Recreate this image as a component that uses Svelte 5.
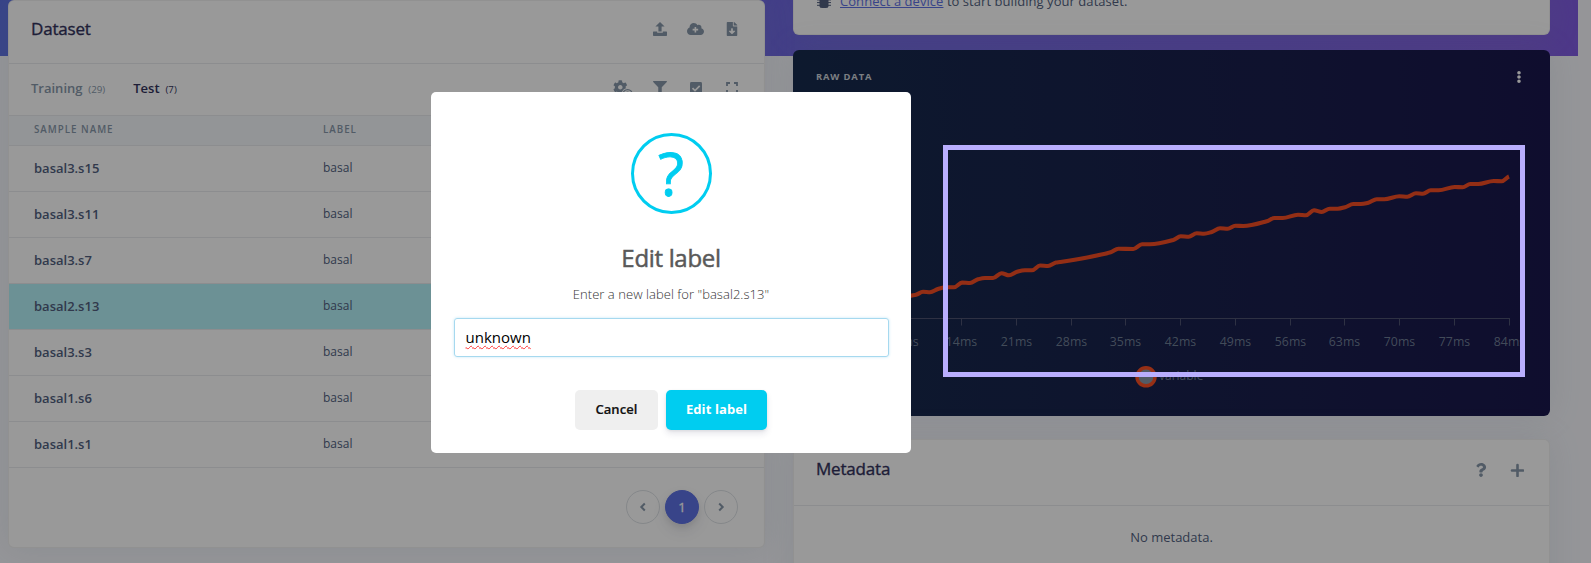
<script>
  const rows = ['basal3.s15', 'basal3.s11', 'basal3.s7', 'basal2.s13', 'basal3.s3', 'basal1.s6', 'basal1.s1'];
  const selected = 'basal2.s13';

  const points = [
    [903, 298], [911, 295.7], [916, 294.8], [923, 291.8], [930, 292.2], [938, 289], [946, 287.2], [954, 287.3], [962, 282.6],
    [970, 283], [978, 279.3], [985, 278], [993, 278], [1001.5, 273.2], [1009, 275.3], [1017, 271.8], [1025, 270.3],
    [1032, 270.3], [1040, 265.5], [1048, 266], [1056, 262.5], [1060, 262], [1110.7, 252.3], [1118.3, 248.7],
    [1133.3, 249], [1142, 244.3], [1150, 244.3], [1173.3, 240], [1180.7, 236.3], [1188.7, 236.7], [1196.7, 233.3],
    [1204, 233.7], [1211.7, 232], [1220, 228.3], [1227.7, 228.7], [1235.3, 225.7], [1243.3, 226], [1266.7, 221.3],
    [1274.7, 218], [1282.7, 218], [1298, 214.7], [1306, 215.3], [1314, 210.3], [1321.7, 212], [1329.7, 208.7],
    [1337.7, 208.7], [1345, 207.3], [1353.3, 204], [1360.7, 204], [1368.3, 202.7], [1376.7, 199.3], [1384.3, 199.3],
    [1399.3, 196.3], [1407.3, 196.7], [1416, 193.3], [1423, 193.7], [1430.7, 190.3], [1438.7, 190.3], [1454.7, 187],
    [1462.7, 187.3], [1470.3, 184], [1478.3, 184], [1493.7, 181], [1501.7, 181.3], [1509, 176.5]
  ];

  // Monotone cubic through the samples.
  function curve(p) {
    let d = `M${p[0][0]} ${p[0][1]}`;
    const slope = (i) => {
      if (i === 0 || i === p.length - 1) return -0.4;
      const a = (p[i][1] - p[i - 1][1]) / (p[i][0] - p[i - 1][0]);
      const b = (p[i + 1][1] - p[i][1]) / (p[i + 1][0] - p[i][0]);
      return a * b <= 0 ? 0 : (2 * a * b) / (a + b);
    };
    for (let i = 0; i < p.length - 1; i++) {
      const h = (p[i + 1][0] - p[i][0]) / 3;
      d += `C${p[i][0] + h} ${p[i][1] + h * slope(i)} ${p[i + 1][0] - h} ${p[i + 1][1] - h * slope(i + 1)} ${p[i + 1][0]} ${p[i + 1][1]}`;
    }
    return d;
  }

  const ticks = Array.from({ length: 12 }, (_, i) => ({ x: Math.floor(906.9 + i * 54.76) + 0.5, label: `${(i + 1) * 7}ms` }));
  let label = $state('unknown');
</script>

<div class="page">
  <div class="banner"></div>
  <main>
    <section class="card dataset">
      <header>
        <h2>Dataset</h2>
        <div class="tools">
          <svg class="ic" viewBox="0 0 14 14"><path d="M7 0L11.6 4.6H8.6V9.4H5.4V4.6H2.4zM.4 9.6H4.2V10.8H9.8V9.6H13.6Q14 9.6 14 10V13.3Q14 14 13.3 14H.7Q0 14 0 13.3V10Q0 9.6 .4 9.6z" /></svg>
          <svg class="ic cloud" viewBox="0 32 640 448"><path d="M537.6 226.6c4.1-10.7 6.4-22.4 6.4-34.6 0-53-43-96-96-96-19.7 0-38.1 6-53.3 16.2C367 64.2 315.3 32 256 32c-88.4 0-160 71.6-160 160 0 2.7.1 5.4.2 8.1C40.2 219.8 0 273.2 0 336c0 79.5 64.5 144 144 144h368c70.7 0 128-57.3 128-128 0-61.9-44-113.6-102.4-125.4z" /><path class="cut" d="M286 176h60v74h74v60h-74v74h-60v-74h-74v-60h74z" /></svg>
          <svg class="ic" viewBox="-64 0 512 512"><path d="M224 136V0H24C10.700 0 0 10.700 0 24v464c0 13.300 10.700 24 24 24h336c13.300 0 24-10.700 24-24V160H248c-13.200 0-24-10.800-24-24zm76.450 211.360l-96.420 95.700c-6.650 6.610-17.390 6.610-24.040 0l-96.420-95.700C73.420 337.290 80.540 320 94.820 320H160v-80c0-8.840 7.160-16 16-16h32c8.840 0 16 7.160 16 16v80h65.180c14.280 0 21.400 17.290 11.270 27.360zM377 105L279.100 7c-4.500-4.500-10.600-7-17-7H256v128h128v-6.100c0-6.300-2.500-12.400-7-16.900z" /></svg>
        </div>
      </header>
      <div class="tabs">
        <a class="tab">Training <small>(29)</small></a>
        <a class="tab on">Test <small>(7)</small></a>
        <div class="tools">
          <svg class="gear" viewBox="0 0 20 16"><g transform="scale(.0285)"><path d="M487.400 315.700l-42.600-24.600c4.300-23.200 4.300-47 0-70.200l42.600-24.600c4.900-2.800 7.100-8.600 5.500-14-11.100-35.600-30-67.800-54.700-94.600-3.800-4.100-10-5.100-14.800-2.300L380.800 110c-17.900-15.400-38.500-27.300-60.800-35.100V25.800c0-5.600-3.900-10.500-9.400-11.700-36.700-8.200-74.300-7.800-109.200 0-5.500 1.200-9.400 6.100-9.400 11.700V75c-22.200 7.900-42.800 19.800-60.800 35.100L88.700 85.500c-4.900-2.800-11-1.900-14.800 2.300-24.700 26.700-43.600 58.900-54.700 94.600-1.700 5.400.6 11.200 5.500 14L67.300 221c-4.300 23.200-4.300 47 0 70.200l-42.600 24.600c-4.900 2.800-7.100 8.600-5.500 14 11.100 35.600 30 67.800 54.700 94.600 3.800 4.100 10 5.100 14.800 2.300l42.600-24.600c17.900 15.400 38.500 27.300 60.800 35.100v49.200c0 5.600 3.900 10.500 9.400 11.700 36.700 8.200 74.300 7.800 109.200 0 5.500-1.200 9.400-6.100 9.400-11.700v-49.200c22.200-7.900 42.800-19.800 60.800-35.100l42.600 24.600c4.900 2.800 11 1.900 14.800-2.300 24.700-26.700 43.600-58.900 54.700-94.600 1.500-5.500-.7-11.300-5.600-14.100zM256 336c-44.100 0-80-35.900-80-80s35.900-80 80-80 80 35.900 80 80-35.900 80-80 80z" /></g><circle class="cut" cx="14.600" cy="14" r="6.100" /><circle cx="14.600" cy="14.200" r="5.300" /><circle class="cut" cx="14.600" cy="14.200" r="3.900" /><circle cx="14.600" cy="13.800" r="2.300" /></svg>
          <svg class="ic" viewBox="0 0 512 512"><path d="M487.976 0H24.028C2.710 0-8.047 25.866 7.058 40.971L192 225.941V432c0 7.831 3.821 15.170 10.237 19.662l80 55.980C298.020 518.690 320 507.493 320 487.980V225.941l184.947-184.970C520.021 25.896 509.338 0 487.976 0z" /></svg>
          <svg class="ic" viewBox="0 0 14 14"><rect x="1" y="1" width="12" height="12" rx="1.400" /><path class="tick" d="M3.500 7.200L6 9.600L10.700 4.900" /></svg>
          <svg class="ic" viewBox="0 0 14 14"><path class="stroke" d="M2 5V2H5M9 2H12V5M12 9V12H9M5 12H2V9" /></svg>
        </div>
      </div>
      <div class="thead"><span>SAMPLE NAME</span><span>LABEL</span></div>
      {#each rows as r}
        <div class="row" class:sel={r === selected}><b>{r}</b><span>basal</span></div>
      {/each}
      <footer>
        <span class="pg"><svg viewBox="0 0 8 10"><path d="M5.800 1.500L2.300 5L5.800 8.500" /></svg></span>
        <span class="pg cur">1</span>
        <span class="pg"><svg viewBox="0 0 8 10"><path d="M2.200 1.500L5.700 5L2.200 8.500" /></svg></span>
      </footer>
    </section>

    <div class="right">
      <section class="card device">
        <svg viewBox="0 0 14 15"><rect x="3" y="0" width="8" height="14.500" rx="1.300" /><path d="M0 1.500H14M0 4.200H14M0 6.900H14M0 9.600H14M0 12.300H14" /></svg>
        <p><a>Connect a device</a> to start building your dataset.</p>
      </section>
      <section class="card raw">
        <header>
          <h6>RAW DATA</h6>
          <svg viewBox="24 8 144 496"><path d="M96 184c39.800 0 72 32.200 72 72s-32.200 72-72 72-72-32.200-72-72 32.200-72 72-72zM24 80c0 39.800 32.200 72 72 72s72-32.200 72-72S135.800 8 96 8 24 40.200 24 80zm0 352c0 39.800 32.200 72 72 72s72-32.200 72-72-32.200-72-72-72-72 32.200-72 72z" /></svg>
        </header>
        <svg class="chart" viewBox="793 103 757 313">
          <path class="axis" d="M818 318.500H1509.500" />
          {#each ticks as t}
            <path class="axis" d="M{t.x} 318V325.500" />
            <text x={t.x} y="346">{t.label}</text>
          {/each}
          <path class="line" d={curve(points)} />
          <circle cx="1146" cy="376.800" r="9" />
          <text class="leg" x="1159" y="380">variable</text>
        </svg>
      </section>
      <section class="card meta">
        <header>
          <h2>Metadata</h2>
          <div class="tools">
            <svg class="ic" viewBox="-64 0 512 512"><path d="M202.021 0C122.202 0 70.503 32.703 29.914 91.026c-7.363 10.580-5.093 25.086 5.178 32.874l43.138 32.709c10.373 7.865 25.132 6.026 33.253-4.148 25.049-31.381 43.630-49.449 82.757-49.449 30.764 0 68.816 19.799 68.816 49.631 0 22.552-18.617 34.134-48.993 51.164-35.423 19.860-82.299 44.576-82.299 106.405V320c0 13.255 10.745 24 24 24h72.471c13.255 0 24-10.745 24-24v-5.773c0-42.860 125.268-44.645 125.268-160.627C377.504 66.256 286.902 0 202.021 0zM192 373.459c-38.196 0-69.271 31.075-69.271 69.271 0 38.195 31.075 69.270 69.271 69.270s69.271-31.075 69.271-69.271-31.075-69.270-69.271-69.270z" /></svg>
            <svg class="ic" viewBox="0 0 14 14"><path class="plus" d="M7.500 2V13M2 7.500H13" /></svg>
          </div>
        </header>
        <p>No metadata.</p>
      </section>
    </div>
  </main>

  <div class="overlay">
    <div class="modal" role="dialog">
      <div class="q">?</div>
      <h1>Edit label</h1>
      <p>Enter a new label for "basal2.s13"</p>
      <div class="field"><span>{label}</span></div>
      <div class="btns">
        <button class="cancel">Cancel</button>
        <button class="ok">Edit label</button>
      </div>
    </div>
  </div>
  <div class="highlight"></div>
</div>

<style>
  :global(body) { margin: 0; background: #f8f9fe; }
  .page { position: relative; height: 563px; overflow: hidden; background: #f8f9fe; font-family: 'Open Sans', sans-serif; font-size: 13px; color: #525f7f; box-sizing: border-box; }
  .page :global(*) { box-sizing: border-box; }
  .banner { width: 1578px; height: 56px; margin-bottom: -56px; background: linear-gradient(87deg, #5e72e4, #825ee4); }
  main { position: relative; display: grid; grid-template-columns: 757px 757px; gap: 28px; padding-left: 8px; align-items: start; }
  .card { background: #fff; border: 1px solid rgba(0, 0, 0, .05); border-radius: 6px; box-shadow: 0 0 32px rgba(136, 152, 170, .15); }
  h1, h2, h6, p { margin: 0; }
  h2 { font-size: 17px; line-height: 26px; font-weight: 500; color: #32325d; letter-spacing: -.18px; -webkit-text-stroke: .35px #32325d; }
  .dataset { height: 548px; display: flex; flex-direction: column; }
  .card > header { display: flex; align-items: center; justify-content: space-between; }
  .dataset > header { height: 63px; padding: 0 25.500px 6px 22px; border-bottom: 1px solid #e9ecef; }
  .tools { display: flex; align-items: center; gap: 22px; fill: #8898aa; }
  .ic { width: 14px; height: 14px; display: block; }
  .cloud { width: 17px; height: 12px; margin: 0 -1.500px; }
  .cut { fill: #fff; }
  .tick { fill: none; stroke: #fff; stroke-width: 1.700; }
  .stroke { fill: none; stroke: #8898aa; stroke-width: 1.800; }
  .plus { fill: none; stroke: #8898aa; stroke-width: 2.600; stroke-linecap: round; }
  .tabs { height: 52px; display: flex; align-items: center; padding: 0 25.500px 4px 22px; border-bottom: 1px solid #e9ecef; }
  .tab { font-size: 13px; font-weight: 600; color: #8898aa; margin-right: 28px; }
  .tab.on { color: #32325d; }
  .tab small { font-size: 9.750px; font-weight: 400; margin-left: 2.500px; }
  .tabs .tools { margin-left: auto; }
  .gear { width: 20px; height: 16px; margin: 1px -2.500px 0 0; }
  .thead { height: 30px; display: flex; align-items: center; padding: 0 0 2px 25px; background: #f6f9fc; border-bottom: 1px solid #e9ecef; font-size: 9.750px; font-weight: 600; letter-spacing: 1px; color: #8898aa; }
  .thead span:first-child, .row b { width: 289px; }
  .row { height: 46px; display: flex; align-items: center; padding: 0 0 2px 25px; border-bottom: 1px solid #e9ecef; font-size: 12px; }
  .row b { font-size: 13px; font-weight: 600; }
  .row.sel { background: #b4f2f8; }
  footer { display: flex; justify-content: flex-end; gap: 5px; padding: 22px 26px 0 0; }
  .pg { width: 34px; height: 34px; border: 1px solid #dee2e6; border-radius: 50%; display: flex; align-items: center; justify-content: center; font-size: 13px; }
  .pg svg { width: 8px; height: 10px; fill: none; stroke: #8898aa; stroke-width: 2; }
  .pg.cur { background: #5e72e4; border-color: #5e72e4; color: #fff; -webkit-text-stroke: .3px #fff; box-shadow: 0 7px 14px rgba(50, 50, 93, .1), 0 3px 6px rgba(0, 0, 0, .08); }
  .right { display: flex; flex-direction: column; }
  .device { height: 35px; margin-bottom: 15px; border-radius: 0 0 6px 6px; border-top: 0; display: flex; padding: 0 22.500px; gap: 9.500px; }
  .device svg { width: 14px; height: 15px; margin-top: -7px; fill: #525f7f; stroke: #525f7f; stroke-width: 1; }
  .device p { font-size: 13px; line-height: 20px; margin-top: -9px; letter-spacing: .05px; }
  .device a { color: #5e72e4; text-decoration: underline; }
  .raw { height: 366px; border: 0; background: linear-gradient(87deg, #172b4d, #1a174d); margin-bottom: 23px; }
  .raw > header { height: 53px; padding: 0 29px 0 23px; }
  h6 { font-size: 9.400px; font-weight: 700; letter-spacing: .85px; color: #ced4da; }
  .raw header svg { width: 4px; height: 12px; fill: #fff; }
  .chart { display: block; width: 757px; height: 313px; }
  .axis { stroke: #4e5270; stroke-width: 1; }
  text { font-family: 'Open Sans', sans-serif; font-size: 12.300px; fill: #8898aa; fill-opacity: .8; text-anchor: middle; }
  .leg { text-anchor: start; font-size: 12px; }
  .line { fill: none; stroke: #fb4f23; stroke-width: 4.100; stroke-opacity: .98; }
  circle { stroke-width: 0; }
  .chart circle { fill: #8898aa; stroke: #fb4f23; stroke-width: 3.500; }
  .meta { height: 200px; }
  .meta > header { height: 66px; padding: 0 25.500px 6px 22px; border-bottom: 1px solid #e9ecef; }
  .meta h2 { margin-top: -2px; }
  .meta > p { text-align: center; line-height: 20px; padding-top: 21px; }
  .overlay { position: absolute; inset: 0; background: rgba(0, 0, 0, .4); padding: 92px 0 0 431px; }
  .modal { width: 480px; height: 361px; border-radius: 5px; background: #fff; display: flex; flex-direction: column; align-items: center; padding-top: 41px; }
  .q { width: 81px; height: 81px; border: 3px solid #00cdf0; border-radius: 50%; color: #00cdf0; font-size: 60px; line-height: 75px; text-align: center; -webkit-text-stroke: .8px #00cdf0; }
  h1 { font-size: 24px; line-height: 36px; font-weight: 500; color: #595959; margin-top: 26px; letter-spacing: -.32px; -webkit-text-stroke: .5px #595959; }
  .modal p { font-size: 13px; line-height: 20px; font-weight: 300; color: #333; letter-spacing: .05px; margin-top: 8px; }
  .field { width: 435px; height: 39px; margin-top: 14px; border: 1px solid #a6d9ef; border-radius: 3px; box-shadow: 0 0 3px #c4e6f5; padding: 0 11px 2px; display: flex; align-items: center; font-size: 15px; color: #000; }
  .field span { text-decoration: underline wavy #f33 1px; text-decoration-skip-ink: none; text-underline-offset: 1.500px; }
  .btns { display: flex; gap: 8px; margin-top: 33px; }
  button { height: 40px; border: 0; border-radius: 5px; font: 600 13px 'Open Sans', sans-serif; padding: 0 0 2px; letter-spacing: .1px; }
  .cancel { width: 83px; background: #efefef; color: #111; -webkit-text-stroke: .2px #111; }
  .ok { width: 101px; background: #00cdf0; color: #fff; font-weight: 700; box-shadow: 0 4px 6px rgba(50, 50, 93, .11), 0 1px 3px rgba(0, 0, 0, .08); }
  .highlight { position: absolute; left: 943px; top: 145px; width: 582px; height: 232px; border: 5px solid #b9aefe; }
</style>
